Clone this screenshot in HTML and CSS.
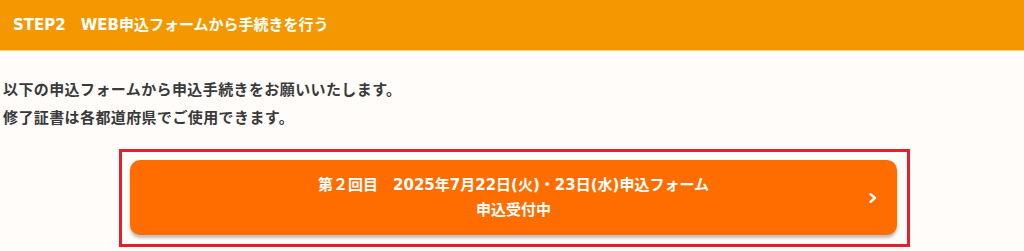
FILE: index.html
```html
<!DOCTYPE html>
<html lang="ja">
<head>
    <meta charset="UTF-8">
    <meta name="viewport" content="width=device-width, initial-scale=1.0">
    <title>STEP2</title>
    <link rel="stylesheet" href="styles.css">
</head>
<body>
    <div class="step_wrap">
        <h3 class="step_title">STEP2　WEB申込フォームから手続きを行う</h3>

        <div class="step_body">
            <p class="step_text">以下の申込フォームから申込手続きをお願いいたします。<br>修了証書は各都道府県でご使用できます。</p>

            <div class="form_frame">
                <a href="#" class="form_btn">
                    <span class="btn_text">第２回目　2025年7月22日(火)・23日(水)申込フォーム<br>申込受付中</span>
                    <svg class="btn_arrow" width="8" height="10" viewBox="0 0 8 10">
                        <path d="M1.5 1.2 L6 5 L1.5 8.8" fill="none" stroke="#fff" stroke-width="2.4" stroke-linecap="round" stroke-linejoin="round"/>
                    </svg>
                </a>
            </div>
        </div>
    </div>
</body>
</html>
```

FILE: styles.css
```css
* {
  margin: 0;
  padding: 0;
  box-sizing: border-box;
}

body {
  background-color: #fffcfa;
  font-family: "Noto Sans CJK JP", "Noto Sans", sans-serif;
  color: #333;
}

.step_wrap {
  width: 1024px;
}

.step_title {
  height: 51px;
  background-color: #f39800;
  border-bottom: 1px solid #fbc98a;
  color: #fff;
  font-family: "DejaVu Sans", "Noto Sans CJK JP", sans-serif;
  font-size: 15px;
  font-weight: bold;
  line-height: 50px;
  padding-left: 13px;
}

.step_body {
  padding: 24px 0 0 3px;
}

.step_text {
  font-size: 15px;
  font-weight: bold;
  line-height: 28px;
  letter-spacing: 0.4px;
  color: #3a3a3a;
}

.form_frame {
  margin: 18px 0 0 116px;
  width: 791px;
  height: 98px;
  border: 3px solid #e5202a;
  padding: 8px 10px 0 8px;
}

.form_btn {
  position: relative;
  display: flex;
  align-items: center;
  justify-content: center;
  height: 75px;
  background-color: #ff6d00;
  border-radius: 10px;
  box-shadow: 0 3px 3px rgba(0, 0, 0, 0.25);
  color: #fff;
  text-decoration: none;
}

.btn_text {
  font-family: "DejaVu Sans", "Noto Sans CJK JP", sans-serif;
  font-size: 15px;
  font-weight: bold;
  line-height: 25px;
  text-align: center;
}

.btn_arrow {
  position: absolute;
  right: 20px;
  top: 33px;
}
```
